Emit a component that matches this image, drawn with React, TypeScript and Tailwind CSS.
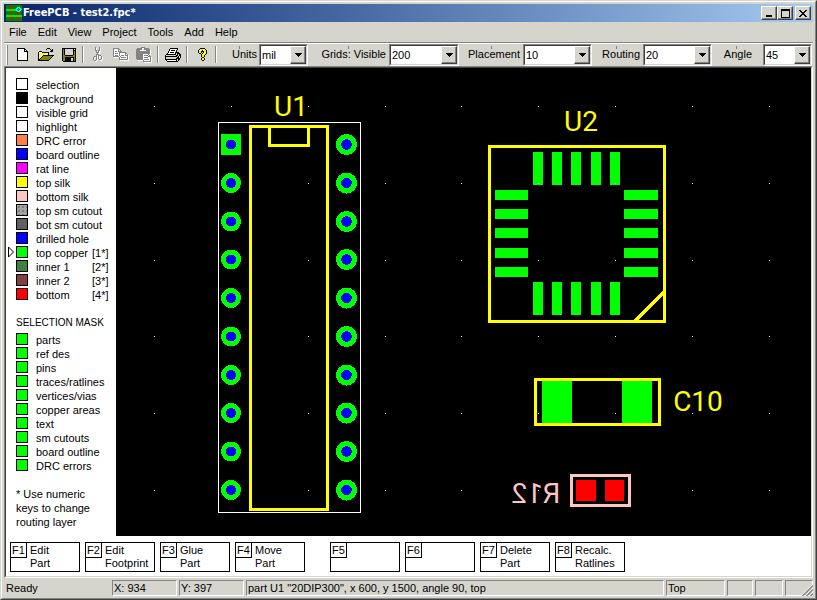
import React from "react";

const PALETTE: Record<string, string> = {
  k: "#000000",
  w: "#ffffff",
  y: "#ffff00",
  o: "#848400",
  g: "#d6d5cd",
  d: "#848484",
  c: "#fffbb0",
  n: "#008200",
  l: "#00e800",
  r: "#f00000",
  b: "#00ffff",
};

function Pixels({ rows, disabled = false }: { rows: string[]; disabled?: boolean }) {
  const width = Math.max(...rows.map((row) => row.length)) + (disabled ? 1 : 0);
  const height = rows.length + (disabled ? 1 : 0);
  const cells = (shift: number, flat?: string) =>
    rows.flatMap((row, y) =>
      row.split("").map((ch, x) =>
        ch === "." ? null : (
          <rect key={`${shift}-${x}-${y}`} x={x + shift} y={y + shift} width="1" height="1" fill={flat ?? PALETTE[ch]} />
        )
      )
    );
  return (
    <svg width={width} height={height} viewBox={`0 0 ${width} ${height}`} shapeRendering="crispEdges" aria-hidden="true">
      {disabled && cells(1, "#ffffff")}
      {cells(0)}
    </svg>
  );
}

const NEW_ICON = [
  "kkkkkkkk...",
  "kwwwwwwkk..",
  "kwwwwwwkwk.",
  "kwwwwwwkkkk",
  "kwwwwwwwwwk",
  "kwwwwwwwwwk",
  "kwwwwwwwwwk",
  "kwwwwwwwwwk",
  "kwwwwwwwwwk",
  "kwwwwwwwwwk",
  "kwwwwwwwwwk",
  "kwwwwwwwwwk",
  "kkkkkkkkkkk",
];
const OPEN_ICON = [
  ".........kkk....",
  "........k...k.k.",
  ".............kk.",
  ".kkk........kkk.",
  "kycykkkkkkk.....",
  "kcycycycyck.....",
  "kycycycycyk.....",
  "kcycykkkkkkkkkkk",
  "kycykoooooooook.",
  "kcykoooooooook..",
  "kykoooooooook...",
  "kkoooooooook....",
  "kkkkkkkkkkk.....",
];
const SAVE_ICON = [
  "kkkkkkkkkkkkkk",
  "kokggggggggkgk",
  "kokggggggggkkk",
  "kokggggggggkok",
  "kokggggggggkok",
  "kokggggggggkok",
  "kokggggggggkok",
  "kookkkkkkkkook",
  "kooooooooooook",
  "kookkkkkkkkkok",
  "kookkkkkkggkok",
  "kookkkkkkggkok",
  "kookkkkkkggkok",
  ".kkkkkkkkkkkkk",
];
const CUT_ICON = [
  "..d...d..",
  "..d...d..",
  "..d...d..",
  "..dd.dd..",
  "...d.d...",
  "...ddd...",
  "....d....",
  "...ddd...",
  "...d.ddd.",
  ".ddd.d..d",
  "d..d.d..d",
  "d..d.d..d",
  "d..d..dd.",
  ".dd......",
];
const COPY_ICON = [
  "dddddd.........",
  "dwwwwdd........",
  "dwwwwdwd.......",
  "dwddwdddd......",
  "dwwwwwddddddd..",
  "dwdddwdwwwwwdd.",
  "dwwwwwdwwwwwdwd",
  "dwdddwdwdddwddd",
  "ddddddwdwwwwwwd",
  "......dwdddddwd",
  "......dwwwwwwwd",
  "......ddddddddd",
];
const PASTE_ICON = [
  ".....dddd......",
  ".ddddd..ddddd..",
  "dddddd..dddddd.",
  "ddddwwwwwwdddd.",
  "dddddddddddddd.",
  "dddddddddddddd.",
  "dddddddddddddd.",
  "dddddddwwwwwd..",
  "dddddddwddddwd.",
  "dddddddwwwwwddd",
  "dddddddwddddwwd",
  "dddddddwwwwwwwd",
  ".ddddddwdddddwd",
  ".......dwwwwwwd",
  ".......dddddddd",
];
const PRINT_ICON = [
  ".....kkkkkkkk...",
  "....kwwwwwwwk...",
  "....kwkkkkwk....",
  "...kwwwwwwwk....",
  "...kwkkkkwkkkk..",
  "..kwwwwwwwkgkkk.",
  ".kkkkkkkkkkgkgkk",
  "kggggggggggkkgkk",
  "kkkkkkkkkkkkgkgk",
  "kgggggygggggkkgk",
  "kggggggggggkkkk.",
  "kkkkkkkkkkkkgkk.",
  ".kwwwwwwwwwkgk..",
  "..kkkkkkkkkkk...",
];
const HELP_ICON = [
  "...kkkkk..",
  "..kyyyyyk.",
  ".kyyykyyyk",
  ".kyykkkyyk",
  ".kyyk.kyyk",
  "..kk.kyyyk",
  "....kyyyk.",
  "....kyyk..",
  "....kyyk..",
  ".....kk...",
  "....kyyk..",
  "....kyyk..",
  ".....kk...",
];
const APP_ICON = [
  "nnnnnnnnnnnnnnnn",
  "nnnnrrnnnnnnnnnn",
  "nnnnrrnnnnnbbbnn",
  "nnnnrrnnnnbbnbbn",
  "lllllllllbbnnnbb",
  "llllllllllbbnbbn",
  "nnnnrrnnnnnbbbnn",
  "nnnnrrnnnnnrrnnn",
  "nnnnnnnnnnnrrnnn",
  "nnnnrrnnnnnrrnnn",
  "llllllllllllllll",
  "llllllllllllllll",
  "nnnnrrnnnnnrrnnn",
  "nnnnrrnnnnnrrnnn",
  "nnnnrrnnnnnrrnnn",
  "nnnnnnnnnnnnnnnn",
];
const MIN_ICON = [".......", ".......", ".......", ".......", ".......", ".......", "kkkkkk.", "kkkkkk."];
const MAX_ICON = [
  "kkkkkkkkk",
  "kkkkkkkkk",
  "k.......k",
  "k.......k",
  "k.......k",
  "k.......k",
  "k.......k",
  "k.......k",
  "kkkkkkkkk",
];
const CLOSE_ICON = ["kk....kk", ".kk..kk.", "..kkkk..", "...kk...", "..kkkk..", ".kk..kk.", "kk....kk"];
const DOWN_ICON = ["kkkkkkk", ".kkkkk.", "..kkk..", "...k..."];

const RAISED =
  "border border-t-white border-l-white border-r-[#404040] border-b-[#404040] shadow-[inset_-1px_-1px_0_#848484]";

function CaptionButton({ label, rows }: { label: string; rows: string[] }) {
  return (
    <button aria-label={label} className={`flex h-[14px] w-4 items-center justify-center bg-[#d6d5cd] ${RAISED}`}>
      <Pixels rows={rows} />
    </button>
  );
}

function ToolButton({ label, rows, disabled }: { label: string; rows: string[]; disabled?: boolean }) {
  return (
    <button aria-label={label} disabled={disabled} className="flex h-5 w-[23px] items-center justify-center">
      <Pixels rows={rows} disabled={disabled} />
    </button>
  );
}

function ToolSeparator() {
  return (
    <div className="flex w-[6px] justify-center">
      <div className="h-[17px] w-[2px] border-l border-r border-l-[#848484] border-r-white" />
    </div>
  );
}

function Combo({ id, label, value, labelClass, widthClass }: {
  id: string;
  label: string;
  value: string;
  labelClass: string;
  widthClass: string;
}) {
  return (
    <>
      <label
        htmlFor={id}
        className={`relative flex h-[22px] items-center justify-end whitespace-nowrap before:absolute before:top-[2px] before:h-[3px] before:w-px before:bg-[#848484] ${labelClass}`}
      >
        {label}
      </label>
      <div
        className={`relative h-[22px] shrink-0 border border-t-[#848484] border-l-[#848484] border-r-white border-b-white ${widthClass}`}
      >
        <select
          id={id}
          defaultValue={value}
          className="block h-full w-full appearance-none border border-t-[#404040] border-l-[#404040] border-r-[#d6d5cd] border-b-[#d6d5cd] bg-white pl-px text-[11px] leading-[16px] outline-none"
        >
          <option>{value}</option>
        </select>
        <span
          className={`pointer-events-none absolute top-px right-px bottom-px flex w-4 items-center justify-center bg-[#d6d5cd] ${RAISED}`}
        >
          <Pixels rows={DOWN_ICON} />
        </span>
      </div>
    </>
  );
}

const LAYERS: { name: string; color: string; key?: string; active?: boolean }[] = [
  { name: "selection", color: "bg-white" },
  { name: "background", color: "bg-black" },
  { name: "visible grid", color: "bg-white" },
  { name: "highlight", color: "bg-white" },
  { name: "DRC error", color: "bg-[#ff8040]" },
  { name: "board outline", color: "bg-[#0000ff]" },
  { name: "rat line", color: "bg-[#ff00ff]" },
  { name: "top silk", color: "bg-[#ffff00]" },
  { name: "bottom silk", color: "bg-[#ffc4c4]" },
  { name: "top sm cutout", color: "bg-[#a4a4a4] bg-[radial-gradient(#808080_1px,transparent_1px)] bg-[length:4px_4px]" },
  { name: "bot sm cutout", color: "bg-[#606060]" },
  { name: "drilled hole", color: "bg-[#0000ff]" },
  { name: "top copper", color: "bg-[#00ff00]", key: "[1*]", active: true },
  { name: "inner 1", color: "bg-[#408040]", key: "[2*]" },
  { name: "inner 2", color: "bg-[#804040]", key: "[3*]" },
  { name: "bottom", color: "bg-[#ff0000]", key: "[4*]" },
];

const MASKS = [
  "parts",
  "ref des",
  "pins",
  "traces/ratlines",
  "vertices/vias",
  "copper areas",
  "text",
  "sm cutouts",
  "board outline",
  "DRC errors",
];

function Sidebar() {
  return (
    <aside className="w-[110px] shrink-0 pt-[10px] text-[11px] leading-[14px]">
      <ul>
        {LAYERS.map((layer) => (
          <li key={layer.name} className="flex h-[14px]">
            <span className="w-[10px] pl-[2px]">
              {layer.active && (
                <svg width="7" height="12" viewBox="0 0 7 12" aria-hidden="true">
                  <path d="M0.5 1v10l5-5z" fill="white" stroke="black" />
                </svg>
              )}
            </span>
            <span className={`h-3 w-3 border border-black ${layer.color}`} />
            <span className="w-16 pl-2 whitespace-nowrap">{layer.name}</span>
            <span>{layer.key}</span>
          </li>
        ))}
      </ul>
      <h2 className="mt-[14px] mb-[3px] pl-[10px] text-[10px] leading-[14px] whitespace-nowrap">SELECTION MASK</h2>
      <div className="pl-[10px]">
        {MASKS.map((mask) => (
          <label key={mask} className="flex h-[14px] whitespace-nowrap">
            <input
              type="checkbox"
              defaultChecked
              className="mr-2 h-3 w-3 appearance-none border border-black bg-[#ff0000] checked:bg-[#00ff00]"
            />
            {mask}
          </label>
        ))}
      </div>
      <p className="mt-[14px] pl-[10px] whitespace-pre-line">{"* Use numeric\nkeys to change\nrouting layer"}</p>
    </aside>
  );
}

const DOT_X = [154, 231, 308, 385, 461, 538, 615, 692, 769];
const DOT_Y = [106, 183, 260, 336, 413, 490];
const PIN_Y = [144.5, 183, 221.5, 259.5, 298, 336.5, 375, 413, 451.5, 490];
const PAD_X = [533, 552, 571, 591, 610];
const PAD_Y = [190, 209, 228, 248, 267];

function Board() {
  return (
    <main className="min-w-0 flex-1 overflow-hidden bg-black">
      <svg width="695" height="468" viewBox="116 68 695 468" role="img" aria-label="Board layout">
        <g shapeRendering="crispEdges">
          <rect x="218.5" y="122.5" width="142" height="390" fill="none" stroke="#fff" />
          <g fill="#00ff00">
            <rect x="221" y="134" width="20" height="21" />
            {PIN_Y.slice(1).map((y) => (
              <circle key={y} cx="231" cy={y} r="10" />
            ))}
            {PIN_Y.map((y) => (
              <circle key={y} cx="346.5" cy={y} r="10.5" />
            ))}
            {PAD_X.map((x) => (
              <React.Fragment key={x}>
                <rect x={x} y="152" width="10" height="33" />
                <rect x={x} y="282" width="10" height="33" />
              </React.Fragment>
            ))}
            {PAD_Y.map((y) => (
              <React.Fragment key={y}>
                <rect x="495" y={y} width="33" height="10" />
                <rect x="624" y={y} width="34" height="10" />
              </React.Fragment>
            ))}
            <rect x="542" y="380" width="30" height="44" />
            <rect x="622" y="380" width="30" height="44" />
          </g>
          {DOT_X.flatMap((x) => DOT_Y.map((y) => <rect key={`${x}-${y}`} x={x} y={y} width="1" height="1" fill="#fff" />))}
          <g fill="#0000ff">
            {PIN_Y.map((y) => (
              <React.Fragment key={y}>
                <circle cx="231" cy={y} r="5" />
                <circle cx="346.5" cy={y} r="5.3" />
              </React.Fragment>
            ))}
          </g>
          <g fill="none" stroke="#ffff00" strokeWidth="3" strokeLinejoin="round">
            <rect x="250.5" y="126.5" width="77" height="383" />
            <path d="M269.5 126.5v19h39v-19" />
            <rect x="489.5" y="146.5" width="175" height="175" />
            <rect x="535.5" y="379.5" width="124" height="45" />
            <path d="M634.5 321.5l30-30" />
          </g>
          <rect x="571.5" y="475.5" width="58" height="30" fill="none" stroke="#ffc4c4" strokeWidth="3" strokeLinejoin="round" />
          <rect x="576" y="480" width="20" height="21" fill="#ff0000" />
          <rect x="605" y="480" width="19" height="21" fill="#ff0000" />
        </g>
        <g className="font-['Roboto',sans-serif] text-[28px]" fill="#ffff00" textAnchor="middle">
          <text x="291" y="116">U1</text>
          <text x="581" y="131">U2</text>
          <text x="698" y="411">C10</text>
          <text transform="translate(536 503) scale(-1 1)" fill="#ffc4c4">
            R12
          </text>
        </g>
      </svg>
    </main>
  );
}

function KeyButton({ name, lines }: { name: string; lines: string }) {
  return (
    <button className="flex h-[30px] w-[70px] items-start border border-black text-left text-[11px] leading-[13px]">
      <span className="h-[15px] w-4 border-r border-b border-black pt-px text-center">{name}</span>
      <span className="pt-px pl-[3px] whitespace-pre-line">{lines}</span>
    </button>
  );
}

function Pane({ children, className }: { children?: React.ReactNode; className: string }) {
  return (
    <div
      className={`h-4 overflow-hidden border border-t-[#848484] border-l-[#848484] border-r-white border-b-white pl-px leading-[15px] whitespace-nowrap ${className}`}
    >
      {children}
    </div>
  );
}

export default function App() {
  return (
    <div className="flex h-screen w-full flex-col overflow-hidden border border-t-[#d6d5cd] border-l-[#d6d5cd] border-r-[#404040] border-b-[#404040] bg-[#d6d5cd] font-['Liberation_Sans',Arial,sans-serif] text-[11px] text-black">
      <div className="flex min-h-0 flex-1 flex-col border border-t-white border-l-white border-r-[#848484] border-b-[#848484] px-[2px] pt-[2px]">
        <header className="flex h-[18px] shrink-0 items-center bg-linear-to-r from-[#0a246a] to-[#a6caf0] px-[2px]">
          <Pixels rows={APP_ICON} />
          <h1 className="flex-1 pl-px font-['DejaVu_Sans_Condensed','DejaVu_Sans',sans-serif] text-[11px] leading-[18px] font-bold text-white">
            FreePCB - test2.fpc*
          </h1>
          <CaptionButton label="Minimize" rows={MIN_ICON} />
          <CaptionButton label="Maximize" rows={MAX_ICON} />
          <span className="w-[2px]" />
          <CaptionButton label="Close" rows={CLOSE_ICON} />
        </header>
        <nav className="flex h-5 shrink-0 items-center gap-[11px] pl-[5px]">
          {["File", "Edit", "View", "Project", "Tools", "Add", "Help"].map((item) => (
            <button key={item} className="leading-5">
              {item}
            </button>
          ))}
        </nav>
        <div className="flex h-6 shrink-0 items-center border-t border-[#848484] shadow-[inset_0_1px_0_#fff]">
          <div className="mr-[3px] ml-[2px] h-5 w-[2px] border-l border-r border-l-white border-r-[#848484]" />
          <ToolButton label="New" rows={NEW_ICON} />
          <ToolButton label="Open" rows={OPEN_ICON} />
          <ToolButton label="Save" rows={SAVE_ICON} />
          <ToolSeparator />
          <ToolButton label="Cut" rows={CUT_ICON} disabled />
          <ToolButton label="Copy" rows={COPY_ICON} disabled />
          <ToolButton label="Paste" rows={PASTE_ICON} disabled />
          <ToolSeparator />
          <ToolButton label="Print" rows={PRINT_ICON} />
          <ToolSeparator />
          <ToolButton label="Help" rows={HELP_ICON} />
          <ToolSeparator />
          <Combo id="units" label="Units" value="mil" labelClass="w-10 pr-[2px] before:left-5" widthClass="w-[49px]" />
          <Combo id="visible" label="Grids: Visible" value="200" labelClass="w-[81px] pr-[3px] before:left-10" widthClass="w-[70px]" />
          <Combo id="placement" label="Placement" value="10" labelClass="w-16 pr-[3px] before:left-8" widthClass="w-[69px]" />
          <Combo id="routing" label="Routing" value="20" labelClass="w-[51px] pr-[3px] before:left-6" widthClass="w-[69px]" />
          <Combo id="angle" label="Angle" value="45" labelClass="w-[51px] pr-[11px] before:left-6" widthClass="w-[49px]" />
        </div>
        <div className="flex min-h-0 flex-1 flex-col border border-t-[#848484] border-l-[#848484] border-r-white border-b-white">
          <div className="flex min-h-0 flex-1 flex-col border border-t-[#404040] border-l-[#404040] border-r-[#d6d5cd] border-b-[#d6d5cd] bg-white">
            <div className="flex min-h-0 flex-1 overflow-hidden">
              <Sidebar />
              <Board />
            </div>
            <div className="flex h-10 shrink-0 gap-[5px] pt-[6px] pl-1">
              <KeyButton name="F1" lines={"Edit\nPart"} />
              <KeyButton name="F2" lines={"Edit\nFootprint"} />
              <KeyButton name="F3" lines={"Glue\nPart"} />
              <KeyButton name="F4" lines={"Move\nPart"} />
              <span className="w-[15px]" />
              <KeyButton name="F5" lines="" />
              <KeyButton name="F6" lines="" />
              <KeyButton name="F7" lines={"Delete\nPart"} />
              <KeyButton name="F8" lines={"Recalc.\nRatlines"} />
            </div>
          </div>
        </div>
        <footer className="relative flex h-5 shrink-0 gap-[2px] pt-[2px]">
          <div className="w-[106px] pl-[2px] leading-4">Ready</div>
          <Pane className="w-[65px]">X: 934</Pane>
          <Pane className="w-[65px]">Y: 397</Pane>
          <Pane className="min-w-0 flex-1">part U1 "20DIP300", x 600, y 1500, angle 90, top</Pane>
          <Pane className="w-[59px]">Top</Pane>
          <Pane className="w-[26px]" />
          <Pane className="w-7" />
          <Pane className="w-7" />
          <svg className="absolute right-0 bottom-[2px]" width="12" height="12" viewBox="0 0 12 12" aria-hidden="true">
            <path d="M0 12L12 0M4 12l8-8M8 12l4-4" stroke="#fff" />
            <path d="M1.500 12L12 1.500M5.500 12L12 5.500M9.500 12L12 9.500" stroke="#848484" strokeWidth="1.500" />
          </svg>
        </footer>
      </div>
    </div>
  );
}
